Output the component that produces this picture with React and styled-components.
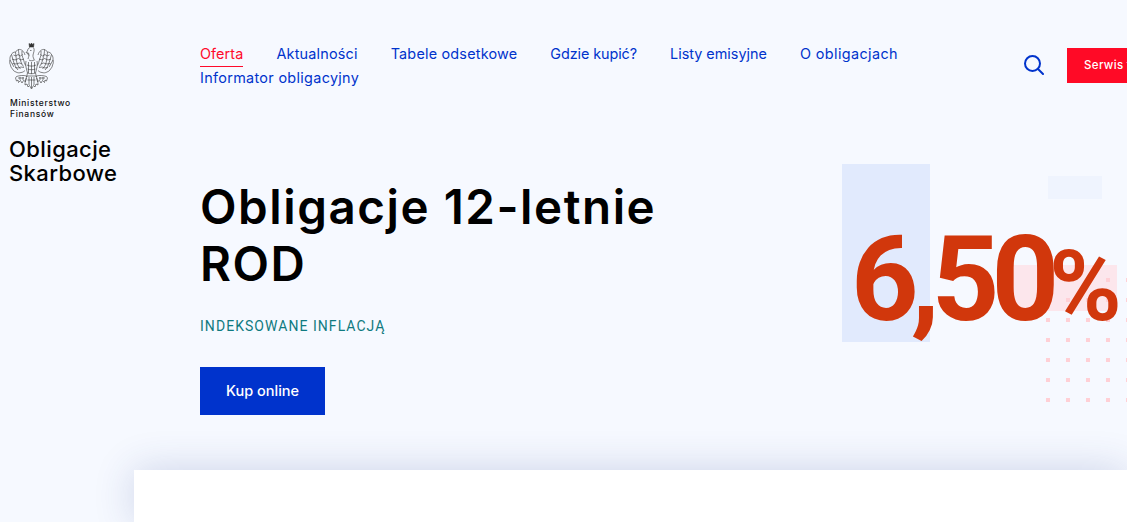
import React from "react";
import styled, { createGlobalStyle } from "styled-components";

const Global = createGlobalStyle`
  html, body { margin: 0; padding: 0; background: #f6f9ff; }
  body { font-family: "Inter", "Liberation Sans", sans-serif; }
`;

const Page = styled.div`
  width: 1127px;
  height: 522px;
  overflow: hidden;
  display: grid;
  grid-template-columns: 200px 927px;
  grid-template-rows: 470px 1fr;
  background: #f6f9ff;
`;

const Brand = styled.div`
  display: flex;
  flex-direction: column;
  align-items: flex-start;
  padding: 42px 0 0 9px;
`;

const Ministry = styled.div`
  margin: 8px 0 0 1px;
  font-size: 8.5px;
  line-height: 11px;
  font-weight: 500;
  letter-spacing: 0.7px;
  color: #111;
`;

const BrandName = styled.div`
  margin-top: 17px;
  font-size: 22px;
  line-height: 24px;
  font-weight: 500;
  letter-spacing: 0.4px;
  color: #000;
`;

const Main = styled.div`
  display: flex;
  flex-direction: column;
  min-width: 0;
`;

const TopBar = styled.div`
  display: flex;
  align-items: flex-start;
  padding-top: 42px;
  height: 122px;
  box-sizing: border-box;
`;

const Nav = styled.nav`
  display: flex;
  flex: none;
  flex-wrap: wrap;
  column-gap: 33px;
  width: 704px;
  margin-right: 120px;
`;

const NavLink = styled.a`
  display: block;
  height: 24px;
  font-size: 14.4px;
  line-height: 24px;
  letter-spacing: ${p => p.$ls}px;
  color: ${p => (p.$active ? "#ff0a2b" : "#0033cc")};
  box-shadow: ${p => (p.$active ? "0 1px 0 #ff0a2b" : "none")};
  white-space: nowrap;
`;

const SearchButton = styled.button`
  display: block;
  flex: none;
  width: 22px;
  height: 22px;
  margin-top: 12px;
  padding: 0;
  border: 0;
  background: none;
  color: #0033cc;
  text-align: left;
  line-height: 0;
`;

const ServiceButton = styled.a`
  display: block;
  flex: none;
  margin: 6px 0 0 21px;
  width: 160px;
  height: 35px;
  padding-left: 17px;
  box-sizing: border-box;
  background: #ff0a26;
  color: #fff;
  font-size: 11.5px;
  line-height: 35px;
  font-weight: 500;
  letter-spacing: 0.35px;
  white-space: nowrap;
`;

const Hero = styled.div`
  display: flex;
  justify-content: space-between;
  align-items: flex-start;
`;

const HeroText = styled.div`
  display: flex;
  flex-direction: column;
  align-items: flex-start;
  padding-top: 56px;
`;

const Title = styled.h1`
  margin: 0;
  font-size: 47.5px;
  line-height: 57px;
  font-weight: 600;
  letter-spacing: 1.55px;
  color: #000;
`;

const Subtitle = styled.div`
  margin-top: 24px;
  font-family: "Roboto", sans-serif;
  font-size: 14px;
  line-height: 20px;
  letter-spacing: 1.05px;
  color: #0f7a80;
`;

const BuyButton = styled.a`
  display: block;
  margin-top: 31px;
  width: 125px;
  height: 48px;
  background: #0033cc;
  color: #fff;
  font-size: 14.5px;
  line-height: 48px;
  text-align: center;
  font-weight: 500;
`;

const RateArea = styled.div`
  position: relative;
  flex: none;
  width: 285px;
  height: 290px;
  margin-top: 42px;
`;

const Decor = styled.div`
  position: absolute;
  left: ${p => p.$x}px;
  top: ${p => p.$y}px;
  width: ${p => p.$w}px;
  height: ${p => p.$h}px;
  background: ${p => p.$c};
`;

const Dots = styled.div`
  position: absolute;
  left: 204px;
  top: 114px;
  display: grid;
  grid-template-columns: repeat(5, 4px);
  grid-auto-rows: 4px;
  gap: 16px;
`;

const Dot = styled.span`
  background: #ffd0d6;
`;

const Rate = styled.div`
  position: absolute;
  left: 9px;
  top: 46px;
  display: flex;
  align-items: baseline;
  font-family: "Roboto", sans-serif;
  font-weight: 700;
  color: #d1370c;
  white-space: nowrap;
`;

const RateValue = styled.span`
  font-size: 118px;
  line-height: 140px;
  letter-spacing: -8px;
`;

const RateUnit = styled.span`
  font-size: 98px;
  line-height: 140px;
  letter-spacing: 0;
  margin-left: -2px;
`;

const Card = styled.div`
  grid-column: 1 / -1;
  margin-left: 134px;
  background: #fff;
  box-shadow: 0 0 40px rgba(40, 60, 140, 0.2);
`;

const Eagle = () => (
  <svg width="45" height="48" viewBox="0 0 45 48" fill="none" stroke="#333" strokeWidth="0.6" aria-hidden="true">
    <path d="M20.500 5L20 1.500l1.500 1 1-1.500 1 1.500 1.500-1-.5 3.500z" fill="#333" />
    <path d="M21 5.500c-1.500.5-2.500 2-2.500 3.500l-1.500 1.500 2.500.5c1 2.500 0 4-.5 6" />
    <path d="M24.500 5.500c1.500 2.500 0 5-.5 7.500-.3 2 .8 4 1.800 5.500" />
    <path d="M18 11l2 2.500M21 8.500h1.500" />
    <path d="M16 13c-1-4-4-6-6.500-5.500C8 8.500 7 9 6.500 10 4.500 10 3 11 2.500 12.500 1 14 .8 16 1 18c-.5 1.500-.5 3.500.5 5 0 1.500 1 3 2 4 .5 1.500 2 2.500 3.500 3 1.500 1 3.500 1 5 .5 1.500 0 3-1 4-2" />
    <path d="M6.500 10c.5 3 .5 6 1 9s2 6 4 8M9.500 7.500c0 3 .5 6 1.500 9 .5 3 2 6 3.500 8M2.500 12.500c1 3 1.500 6 2.500 8.500s2 5 4 7M1 18c1.500 2.500 2.500 5 4 7M13 9c-.3 3 .3 6 1.500 8.500.5 2 1 4 2 6" />
    <path d="M4.500 13l2.500 1 2-1.500 2.500 1.500 2-1.500M3 17l3 1 3.500-1.500 2.500 1.500 3-1M3.500 21.500l3.500.5 3.500-1 2.500 1M6 25.500l3 .5 3-1 3 .5" />
    <path d="M29 13c1-4 4-6 6.500-5.500 1.500 1 2.500 1.500 3 2.500 2 0 3.500 1 4 2.500 1.500 1.500 1.700 3.500 1.500 5.500.5 1.500.5 3.500-.5 5 0 1.500-1 3-2 4-.5 1.500-2 2.500-3.500 3-1.500 1-3.500 1-5 .5-1.500 0-3-1-4-2" />
    <path d="M38.500 10c-.5 3-.5 6-1 9s-2 6-4 8M35.500 7.500c0 3-.5 6-1.500 9-.5 3-2 6-3.500 8M42.500 12.500c-1 3-1.500 6-2.500 8.500s-2 5-4 7M44 18c-1.500 2.500-2.500 5-4 7M32 9c.3 3-.3 6-1.500 8.500-.5 2-1 4-2 6" />
    <path d="M40.500 13l-2.500 1-2-1.500-2.500 1.500-2-1.500M42 17l-3 1-3.500-1.500-2.500 1.500-3-1M41.500 21.500l-3.500.5-3.500-1-2.500 1M39 25.500l-3 .5-3-1-3 .5" />
    <path d="M17 19c-1 4 .5 8 1.500 12l-1 4M28 19c1 4-.5 8-1.500 12l1 4M20 18c1.500 1 3.500 1 5 0" />
    <path d="M18 23c3 1.500 6 1.500 9 0M18.500 27c2.500 1 5.500 1 8 0M19.500 20v11M22.500 20v12M25.500 20v11M18.500 31c2.500 1 5.500 1 8 0" />
    <path d="M17.500 34c-3-1-7-.5-10 .5l-1 1.500 1 3 1.500-1 .5 2.500 2-2 1.500 2.500 1.500-2.500 2 1 1-3.500" />
    <path d="M27.500 34c3-1 7-.5 10 .5l1 1.500-1 3-1.500-1-.5 2.500-2-2-1.500 2.500-1.500-2.500-2 1-1-3.500" />
    <path d="M9 36h6M11 35v3M14 35v3M30 36h6M31 35v3M34 35v3" />
    <path d="M18 34c-1.500 3-2 6-2 9l2-1 1 3 1.500-1.500 2 3.500 2-3.500 1.500 1.500 1-3 2 1c0-3-.5-6-2-9z" />
    <path d="M20 35v8M22.500 35v11M25 35v8M18.500 38h8" />
  </svg>
);

const SearchIcon = () => (
  <svg width="20" height="20" viewBox="0 0 20 20" fill="none" stroke="currentColor" strokeWidth="2" strokeLinecap="round" aria-hidden="true">
    <circle cx="8.500" cy="8.500" r="7.500" />
    <path d="M14 14L19 19" />
  </svg>
);

const links = [
  { label: "Oferta", ls: 0.1, active: true },
  { label: "Aktualności", ls: 0.2 },
  { label: "Tabele odsetkowe", ls: 0.2 },
  { label: "Gdzie kupić?", ls: -0.08 },
  { label: "Listy emisyjne", ls: 0 },
  { label: "O obligacjach", ls: 0.4 },
  { label: "Informator obligacyjny", ls: 0.32 },
];

export default function App() {
  return (
    <Page>
      <Global />
      <Brand>
        <Eagle />
        <Ministry>Ministerstwo<br />Finansów</Ministry>
        <BrandName>Obligacje<br />Skarbowe</BrandName>
      </Brand>
      <Main>
        <TopBar>
          <Nav>
            {links.map(l => <NavLink key={l.label} $ls={l.ls} $active={l.active}>{l.label}</NavLink>)}
          </Nav>
          <SearchButton aria-label="Szukaj"><SearchIcon /></SearchButton>
          <ServiceButton>Serwis transakcyjny</ServiceButton>
        </TopBar>
        <Hero>
          <HeroText>
            <Title>Obligacje 12-letnie<br />ROD</Title>
            <Subtitle>INDEKSOWANE INFLACJĄ</Subtitle>
            <BuyButton>Kup online</BuyButton>
          </HeroText>
          <RateArea>
            <Decor $x={0} $y={0} $w={88} $h={178} $c="#e1eafd" />
            <Decor $x={206} $y={12} $w={54} $h={23} $c="#eff4fe" />
            <Decor $x={170} $y={101} $w={105} $h={46} $c="#fce6ec" />
            <Dots>{Array.from({ length: 35 }, (_, i) => <Dot key={i} />)}</Dots>
            <Rate><RateValue>6,50</RateValue><RateUnit>%</RateUnit></Rate>
          </RateArea>
        </Hero>
      </Main>
      <Card />
    </Page>
  );
}
